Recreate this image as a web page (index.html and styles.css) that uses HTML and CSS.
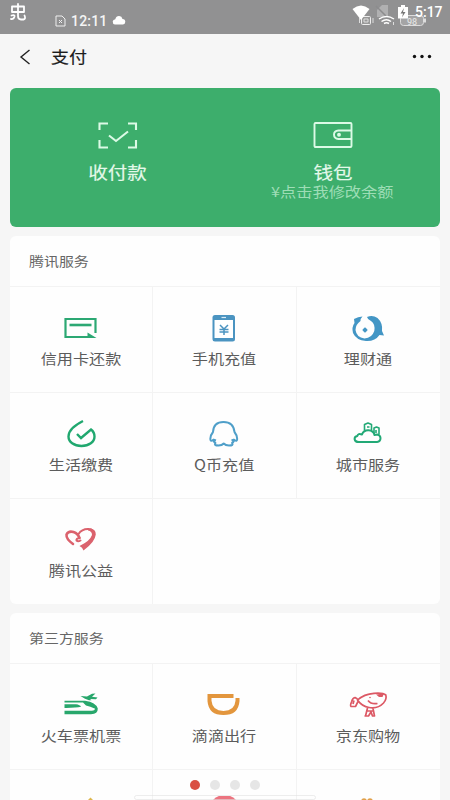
FILE: index.html
```html
<!DOCTYPE html>
<html lang="zh-CN">
<head>
<meta charset="utf-8">
<title>支付</title>
<link rel="stylesheet" href="styles.css">
</head>
<body>
<div class="phone">
  <header class="status">
    <svg class="app-mark" width="18" height="20" viewBox="0 0 18 20" fill="none" stroke="#fff" stroke-width="1.800" stroke-linecap="round" stroke-linejoin="round"><path d="M3 3.500H15V9H3ZM9 1V13Q9 16.500 12 16.500H14.500Q17 16 15.500 12.500M2.500 12.500Q6 11.500 5.500 13.500Q4.500 16.500 2 16"/></svg>
    <svg class="sim" width="11" height="12" viewBox="0 0 11 12" fill="none" stroke="#eee"><path d="M1 1H7L10 4V11H1ZM4 5L7 8M7 5L4 8"/></svg>
    <span class="clock-left">12:11</span>
    <svg class="cloud" width="14" height="10" viewBox="0 0 14 10"><path fill="#fff" d="M3 9.500Q.5 9 .7 6.500Q1 4.500 3.300 4.300Q4.200 .8 7.200 1Q9.900 1.200 10.500 4Q13.300 4.300 13.300 6.800Q13.200 9.200 11 9.500Z"/></svg>
    <svg class="signals" width="76" height="26" viewBox="350 3 76 26" fill="none">
      <rect x="361.500" y="16.500" width="9" height="8" rx="1" fill="#999" stroke="#eee"/><path stroke="#ddd" d="M364 19H368V22H364ZM359.500 18V23M373 18V23"/>
      <path fill="#fff" d="M352.500 9Q361 2 369.500 9L361 20Z"/>
      <path fill="#b0b0b1" d="M377 10L382 5H388V17H377Z"/><path stroke="#8c8c8d" stroke-width="1.500" d="M376 6L389 19"/>
      <path stroke="#fff" stroke-width="1.500" d="M379 19Q386.500 14 394 19M381.500 21.500Q386.500 18 391 21.500M384 23.500Q386.500 22 389 23.500"/><path stroke="#ddd" d="M393.500 22V25"/>
      <rect x="400.500" y="15.500" width="23" height="10" rx="3" fill="#a4a4a5" stroke="#ddd"/><path stroke="#ddd" stroke-width="2" d="M425 18.500V22.500"/>
      <text x="412" y="24.500" class="battery-text" text-anchor="middle">98</text>
      <path fill="#fff" d="M398 7H401V5H405V7H408V18.500H398Z"/><path fill="#777" d="M404 8L400.500 13.500H403L402 17.500L405.500 12H403Z"/>
    </svg>
    <span class="clock-right">5:17</span>
  </header>

  <nav class="nav">
    <svg class="back" width="12" height="16" viewBox="0 0 12 16" fill="none" stroke="#222" stroke-width="1.400"><path d="M10.500 1L2 8L10.500 15"/></svg>
    <h1 class="title"><span class="wide">支付</span></h1>
    <svg class="more" width="20" height="6" viewBox="0 0 20 6" fill="#111"><circle cx="2.500" cy="2.500" r="1.700"/><circle cx="10" cy="2.500" r="1.700"/><circle cx="17.500" cy="2.500" r="1.700"/></svg>
  </nav>

  <main class="content">
    <section class="hero">
      <div class="hero-item">
        <svg width="40" height="28" viewBox="0 0 40 28" fill="none" stroke="#dcfae6" stroke-width="2.100"><path d="M1.500 9V2.500H10M30 2.500H38V9M38 19V26.500H30M10 26.500H1.500V19"/><path d="M11 14.500L18 20L30 10.500"/></svg>
        <span class="wide hero-label">收付款</span>
      </div>
      <div class="hero-item">
        <svg width="40" height="28" viewBox="0 0 40 28" fill="none" stroke="#dcfae6" stroke-width="1.900"><rect x="1.500" y="2" width="37" height="24" rx="1"/><path d="M38 9.500H25.500Q21 10 21 13.500Q21 17.500 25.500 18H38"/><circle cx="26" cy="13.800" r="1" fill="#dcfae6"/></svg>
        <span class="wide hero-label">钱包</span>
        <span class="wide hero-note">¥点击我修改余额</span>
      </div>
    </section>

    <section class="panel">
      <h2 class="panel-head"><span class="wide">腾讯服务</span></h2>
      <div class="grid">
        <div class="cell">
          <svg class="icon" viewBox="0 0 40 30" fill="none" stroke="#2ca873" stroke-width="2.200"><path d="M28 24H4.500V6H34.500V20"/><path d="M8.500 12H30.500" stroke-width="2.600"/><path d="M26.500 19.500L35.500 25H26.500Z" fill="#2ca873" stroke="none"/></svg>
          <span class="wide">信用卡还款</span>
        </div>
        <div class="cell">
          <svg class="icon" viewBox="0 0 40 30" fill="none" stroke="#4b94c1"><rect x="8.500" y="2" width="22.500" height="26.500" rx="2.500" fill="#4b94c1" stroke="none"/><path fill="#fff" stroke="none" d="M10.500 7H29V25H10.500Z"/><path stroke="#d9ecf6" stroke-width="1.200" d="M17.500 4.500H22"/><path stroke-width="1.500" d="M16 12L20 16L24 12M15.500 16.500H24.500M15.500 19H24.500M20 16V22"/></svg>
          <span class="wide">手机充值</span>
        </div>
        <div class="cell">
          <svg class="icon" viewBox="0 0 40 30"><path fill="#4396c5" d="M14.500 3.500Q12 6 12.500 8Q7.500 11.500 7.500 17Q8.500 24.500 16.500 25.500Q24 25 26.300 18Q27.500 11 23 8Q19.500 6.500 19 4Q24.500 1.500 29.500 5Q35 10 34 18L36 22.500L31.500 22Q27 28.500 18 28Q8 27 5 20Q3.500 14 6.500 10L6 6Q10 3.500 14.500 3.500Z"/><path fill="#4396c5" d="M17 14Q18 16.500 20 17Q18 17.500 17 20Q16 17.500 14 17Q16 16.500 17 14Z"/><circle cx="17" cy="17" r="2" fill="#4396c5"/></svg>
          <span class="wide">理财通</span>
        </div>
        <div class="cell">
          <svg class="icon" viewBox="0 0 40 30" fill="none" stroke="#20a86f" stroke-width="2.400"><path d="M22 2C14 6 7.500 11 7.500 17.500C7.500 23 13 27 20.500 27C28 27 33.500 23 33.500 17.500C33.500 14 32 12 30 10.500L20 19L16 15"/></svg>
          <span class="wide">生活缴费</span>
        </div>
        <div class="cell">
          <svg class="icon" viewBox="0 0 40 30" fill="none" stroke="#4f9fc9" stroke-width="2" stroke-linejoin="round"><path d="M9 21Q6.500 23 6.300 20Q6.500 16 9 13Q9.500 3 19.500 3Q29.500 3 30.500 13Q33 16 33.200 20Q33 23 30.500 21Q29.500 23.500 28 24Q30 26.500 25 26.500Q21.500 26.500 19.700 24.500Q18 26.500 14.500 26.500Q9.500 26.500 11.500 24Q10 23.500 9 21ZM9 20.500L12 21.500M30.500 20.500L27.500 21.500"/></svg>
          <span class="wide">Q币充值</span>
        </div>
        <div class="cell">
          <svg class="icon" viewBox="0 0 40 30" fill="none" stroke="#22a976" stroke-width="2" stroke-linejoin="round"><path d="M11 23H29Q32.500 22.500 32.500 19Q32.300 16 29 15.500Q27.500 15.500 26.500 16Q25.500 11.500 20.500 11.200Q15.500 11 14 15.500Q10 14 9.300 17Q6.500 17.500 6.600 20Q7 23 11 23Z"/><path d="M16.500 11.500V5.500L20 4L23.500 5.500V11.500M26 15V9L28.500 8L31 9V15.500M19 8H21.500M28 11V14" stroke-width="1.600"/></svg>
          <span class="wide">城市服务</span>
        </div>
        <div class="cell">
          <svg class="icon" viewBox="0 0 40 30" fill="none" stroke="#db626d" stroke-linecap="round"><path stroke-width="2.600" d="M12 19Q5 14 5.500 9.500Q7.500 5.500 12.500 7Q17 8.500 18.500 13"/><path stroke-width="2" d="M18.500 13Q15 13.500 15.500 15.500Q17 17 19.500 15.500M17.500 9Q21 3.500 28 4Q30 4 31 5"/><path stroke="none" fill="#db626d" d="M27 3.500Q35 3 34.800 9.500Q34 17 22.500 25.500Q21.500 22 18.500 21Q29 16 31 10Q31 6 27 5.500Z"/></svg>
          <span class="wide">腾讯公益</span>
        </div>
        <div class="cell blank"></div>
        <div class="cell blank"></div>
      </div>
    </section>

    <section class="panel">
      <h2 class="panel-head"><span class="wide">第三方服务</span></h2>
      <div class="grid">
        <div class="cell">
          <svg class="icon" viewBox="0 0 40 30" fill="#28a76c"><path d="M19.500 6L26 6.500L31 3.800L34.500 3.500L31 6.800L36.500 7.500L35 9.300L29 9L30.500 10.300L28 10.300L24 8.800Z"/><path d="M3.500 10.800H24Q35 12.500 36.800 18.500Q37 24.200 30 24.200H3.500V20.800H30.500Q33.500 21 34.200 18.800Q29 16.500 25 15.500L22 12.500H3.500Z"/><path d="M3.500 14.300H15Q19 14.800 20 16.800Q15 18 3.500 17.900Z"/></svg>
          <span class="wide">火车票机票</span>
        </div>
        <div class="cell">
          <svg class="icon" viewBox="0 0 40 30" fill="none" stroke="#e3963d" stroke-width="4"><path d="M29.500 6H5.500V11Q6.500 23 19.500 23Q32.500 23 33.500 11V8"/></svg>
          <span class="wide">滴滴出行</span>
        </div>
        <div class="cell">
          <svg class="icon" viewBox="0 0 40 30" fill="none" stroke="#dc5965" stroke-width="1.700" stroke-linejoin="round"><path d="M9.500 10Q16 4 26 3.300Q35 2.500 37.800 5Q39 9 35.500 13Q30 19 21 17.500Q14 16.500 9.500 10ZM9.500 9L7 7.500Q4.500 8 3.500 12Q2 15.500 3 16.500L7.500 16.500L10 11.500M6 10.500L5 14M20 10.500Q23 14.500 29.500 13.500M19.500 18L17.500 26M25 18.500L26.500 26H24.500L23 22L20.500 26H16.500M18 21H26"/><path stroke="none" fill="#dc5965" d="M28 4.500L36 3.500L34.500 7H31Z"/><circle cx="22" cy="7.500" r=".8" fill="#dc5965" stroke="none"/></svg>
          <span class="wide">京东购物</span>
        </div>
        <div class="cell">
          <svg class="icon" viewBox="0 0 40 30" fill="#ddb64d"><path d="M29.500 1.500L34 6H25Z"/></svg>
        </div>
        <div class="cell">
          <svg class="icon" viewBox="0 0 40 30"><circle cx="20.500" cy="15" r="16" fill="#ec7480"/></svg>
        </div>
        <div class="cell">
          <svg class="icon" viewBox="0 0 40 30" fill="#e1a04a"><ellipse cx="16" cy="5" rx="2.800" ry="2.800"/><ellipse cx="22" cy="5" rx="2.800" ry="2.800"/></svg>
        </div>
      </div>
    </section>
  </main>

  <div class="home-bar"></div>
  <div class="pager"><i class="dot active"></i><i class="dot"></i><i class="dot"></i><i class="dot"></i></div>
</div>
</body>
</html>
```

FILE: styles.css
```css
* { box-sizing: border-box; }

body {
  margin: 0;
  font-family: "Noto Sans CJK SC", sans-serif;
}

.phone {
  position: relative;
  width: 450px;
  height: 800px;
  overflow: hidden;
  background: #f6f6f6;
}

h1, h2 { margin: 0; font-weight: 400; }

/* Lettering is broader than it is tall throughout the app. */
.wide {
  display: block;
  white-space: nowrap;
  transform: scaleX(1.15);
}

.status {
  display: flex;
  align-items: flex-start;
  height: 34px;
  padding-left: 9px;
  background: #919192;
  color: #fff;
}
.app-mark { margin-top: 3px; }
.sim { margin: 15px 0 0 28px; }
.clock-left {
  width: 37px;
  margin: 13px 0 0 5px;
  font: 500 14px/16px Roboto, sans-serif;
  letter-spacing: .2px;
  color: #f5f5f5;
}
.cloud { margin: 15px 0 0 4px; }
.signals { margin: 3px 0 0 224px; }
.battery-text { font: 500 9px Roboto, sans-serif; fill: #e0e0e0; }
.clock-right {
  margin: 4px 0 0 -11px;
  font: 500 14px/16px Roboto, sans-serif;
}

.nav {
  display: flex;
  align-items: center;
  height: 54px;
  padding: 0 18px 8px 19px;
}
.title {
  flex: 1;
  margin-left: 20px;
  font-size: 15.7px;
  line-height: 24px;
  color: #1c1c1c;
  -webkit-text-stroke: .15px;
}
.title .wide, .panel-head .wide { transform-origin: left; }

.content {
  display: flex;
  flex-direction: column;
  gap: 9px;
  margin: 0 10px;
}

.hero {
  display: grid;
  grid-template-columns: 1fr 1fr;
  height: 139px;
  border-radius: 6px;
  background: #3dae6c;
  color: #e4f9ea;
}
.hero-item {
  display: flex;
  flex-direction: column;
  align-items: center;
  padding-top: 33px;
}
.hero-label {
  margin-top: 11px;
  font-size: 17px;
  line-height: 23px;
  -webkit-text-stroke: .15px;
}
.hero-note {
  font-size: 14.1px;
  line-height: 16px;
  color: #9eddb6;
}

.panel {
  overflow: hidden;
  border-radius: 6px;
  background: #fefefe;
}
.panel-head {
  height: 50px;
  padding-left: 19px;
  font-size: 13px;
  line-height: 49px;
  color: #666;
}
.grid {
  display: grid;
  grid-template-columns: repeat(3, 1fr);
  grid-auto-rows: 106px;
}
.cell {
  display: flex;
  flex-direction: column;
  align-items: center;
  padding-top: 26px;
  border-top: 1px solid #f3f3f3;
  border-right: 1px solid #f3f3f3;
  font-size: 14px;
  line-height: 20px;
  color: #5c5c5c;
}
.cell:nth-child(3n), .blank { border-right: 0; }
.icon { width: 40px; height: 30px; margin-bottom: 5px; flex: none; }

.home-bar {
  position: absolute;
  left: 134px;
  top: 795px;
  width: 182px;
  height: 5px;
  border: 1px solid rgba(225, 225, 225, .6);
  border-radius: 3px;
}
.pager {
  position: absolute;
  left: 190px;
  top: 780px;
  display: flex;
  gap: 10px;
}
.dot { width: 10px; height: 10px; border-radius: 50%; background: #e6e6e6; }
.active { background: #d94f43; }
```
